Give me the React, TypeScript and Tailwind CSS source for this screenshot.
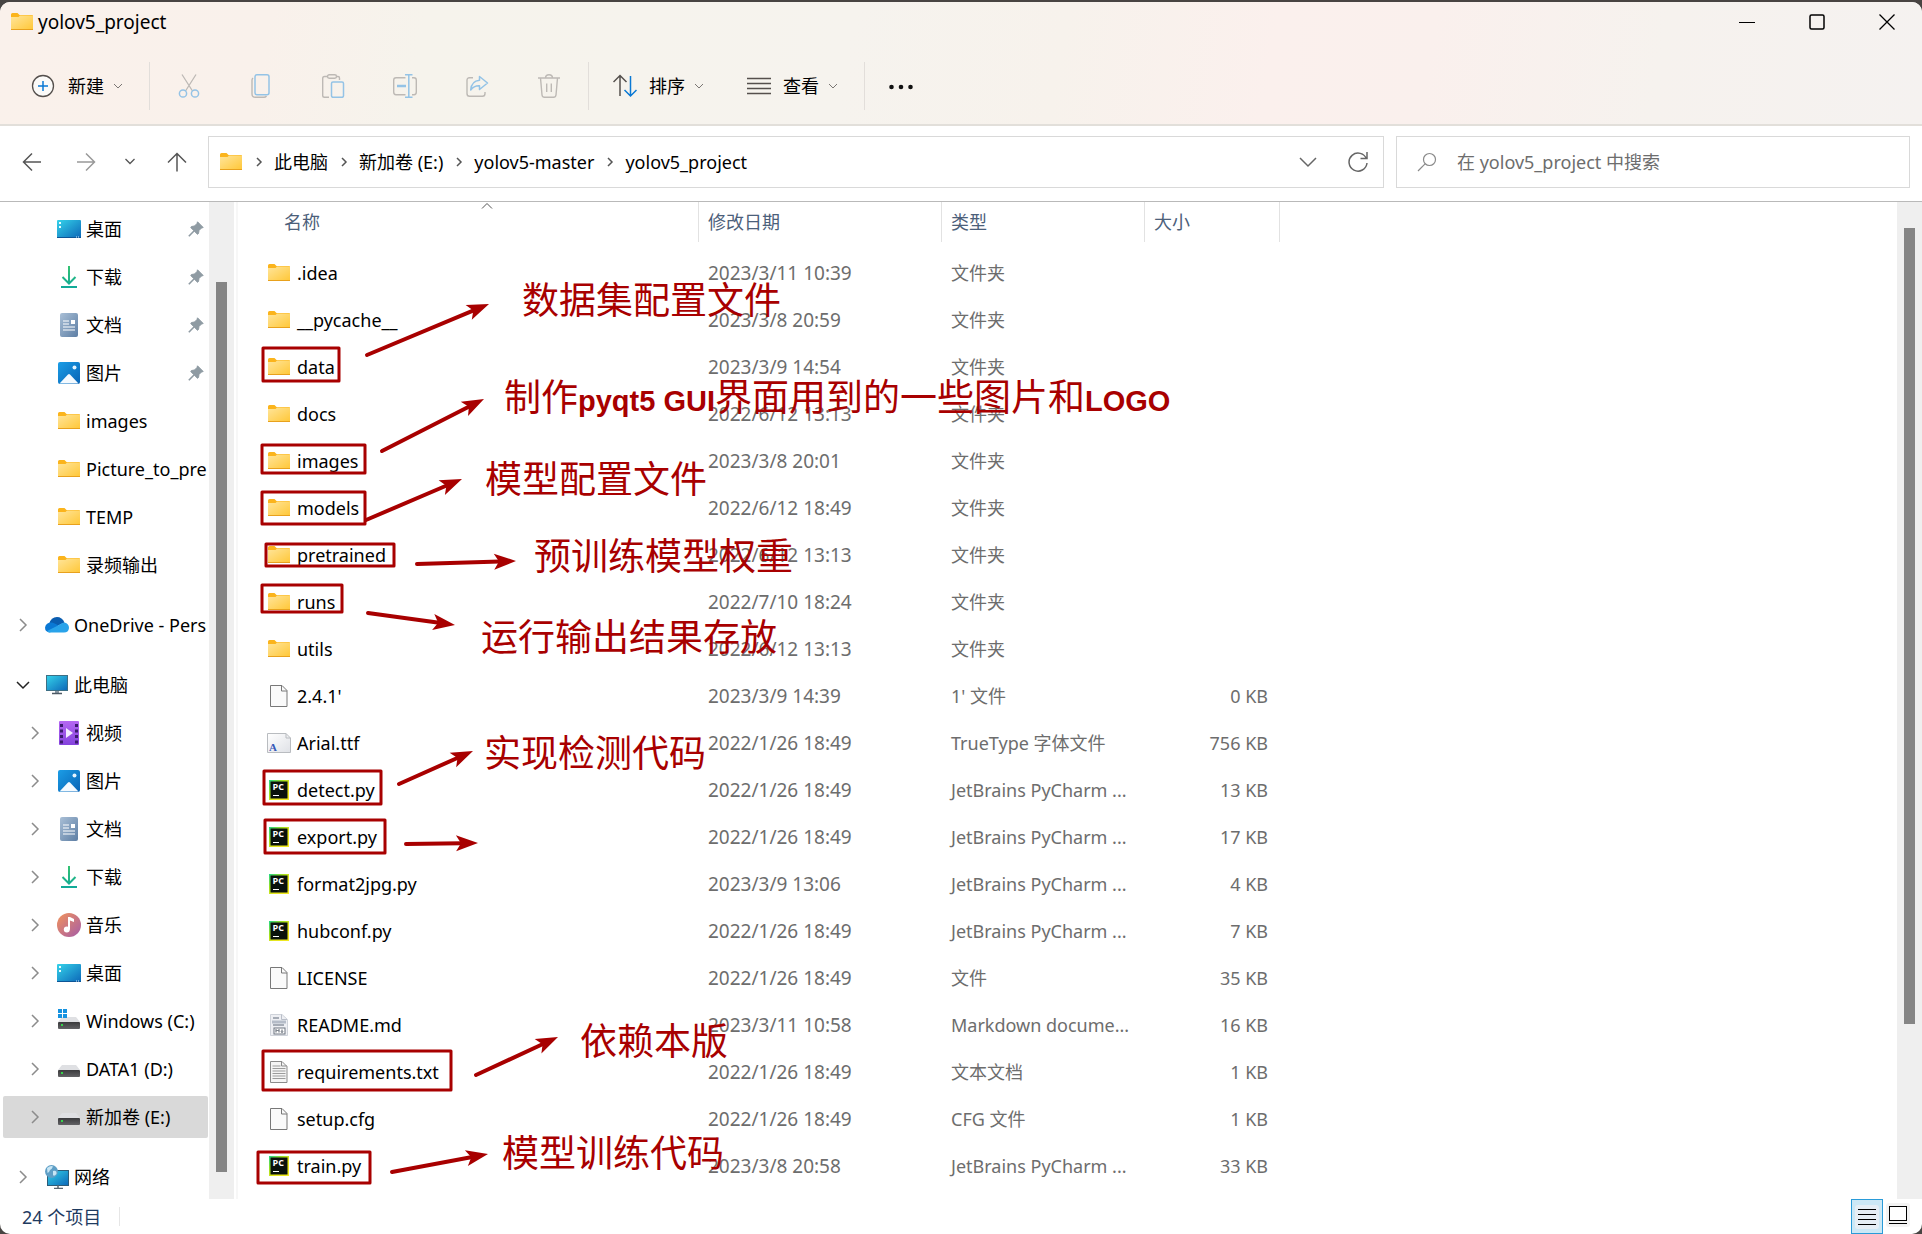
import { Fragment, useState } from 'react'
import type { ReactNode } from 'react'

type IconKind =
  | 'desktop'
  | 'download'
  | 'document'
  | 'picture'
  | 'folder'
  | 'onedrive'
  | 'pc'
  | 'video'
  | 'music'
  | 'system-drive'
  | 'drive'
  | 'network'
  | 'blank'
  | 'font'
  | 'pycharm'
  | 'markdown'
  | 'text'

type NavItem = {
  id: string
  label: string
  icon: IconKind
  root?: boolean
  expanded?: boolean
  collapsed?: boolean
  pinned?: boolean
}

type FileRow = {
  name: string
  date: string
  type: string
  size?: string
  icon: IconKind
}

const navGroups: NavItem[][] = [
  [
    { id: 'q-desktop', label: '桌面', icon: 'desktop', pinned: true },
    { id: 'q-download', label: '下载', icon: 'download', pinned: true },
    { id: 'q-document', label: '文档', icon: 'document', pinned: true },
    { id: 'q-picture', label: '图片', icon: 'picture', pinned: true },
    { id: 'q-images', label: 'images', icon: 'folder' },
    { id: 'q-pre', label: 'Picture_to_pre', icon: 'folder' },
    { id: 'q-temp', label: 'TEMP', icon: 'folder' },
    { id: 'q-record', label: '录频输出', icon: 'folder' },
  ],
  [{ id: 'onedrive', label: 'OneDrive - Pers', icon: 'onedrive', root: true, collapsed: true }],
  [
    { id: 'pc', label: '此电脑', icon: 'pc', root: true, expanded: true },
    { id: 'video', label: '视频', icon: 'video', collapsed: true },
    { id: 'picture', label: '图片', icon: 'picture', collapsed: true },
    { id: 'document', label: '文档', icon: 'document', collapsed: true },
    { id: 'download', label: '下载', icon: 'download', collapsed: true },
    { id: 'music', label: '音乐', icon: 'music', collapsed: true },
    { id: 'desktop', label: '桌面', icon: 'desktop', collapsed: true },
    { id: 'c', label: 'Windows (C:)', icon: 'system-drive', collapsed: true },
    { id: 'd', label: 'DATA1 (D:)', icon: 'drive', collapsed: true },
    { id: 'e', label: '新加卷 (E:)', icon: 'drive', collapsed: true },
  ],
  [{ id: 'network', label: '网络', icon: 'network', root: true, collapsed: true }],
]

const files: FileRow[] = [
  { name: '.idea', date: '2023/3/11 10:39', type: '文件夹', icon: 'folder' },
  { name: '__pycache__', date: '2023/3/8 20:59', type: '文件夹', icon: 'folder' },
  { name: 'data', date: '2023/3/9 14:54', type: '文件夹', icon: 'folder' },
  { name: 'docs', date: '2022/6/12 13:13', type: '文件夹', icon: 'folder' },
  { name: 'images', date: '2023/3/8 20:01', type: '文件夹', icon: 'folder' },
  { name: 'models', date: '2022/6/12 18:49', type: '文件夹', icon: 'folder' },
  { name: 'pretrained', date: '2022/6/12 13:13', type: '文件夹', icon: 'folder' },
  { name: 'runs', date: '2022/7/10 18:24', type: '文件夹', icon: 'folder' },
  { name: 'utils', date: '2022/6/12 13:13', type: '文件夹', icon: 'folder' },
  { name: "2.4.1'", date: '2023/3/9 14:39', type: "1' 文件", size: '0 KB', icon: 'blank' },
  { name: 'Arial.ttf', date: '2022/1/26 18:49', type: 'TrueType 字体文件', size: '756 KB', icon: 'font' },
  { name: 'detect.py', date: '2022/1/26 18:49', type: 'JetBrains PyCharm ...', size: '13 KB', icon: 'pycharm' },
  { name: 'export.py', date: '2022/1/26 18:49', type: 'JetBrains PyCharm ...', size: '17 KB', icon: 'pycharm' },
  { name: 'format2jpg.py', date: '2023/3/9 13:06', type: 'JetBrains PyCharm ...', size: '4 KB', icon: 'pycharm' },
  { name: 'hubconf.py', date: '2022/1/26 18:49', type: 'JetBrains PyCharm ...', size: '7 KB', icon: 'pycharm' },
  { name: 'LICENSE', date: '2022/1/26 18:49', type: '文件', size: '35 KB', icon: 'blank' },
  { name: 'README.md', date: '2023/3/11 10:58', type: 'Markdown docume...', size: '16 KB', icon: 'markdown' },
  { name: 'requirements.txt', date: '2022/1/26 18:49', type: '文本文档', size: '1 KB', icon: 'text' },
  { name: 'setup.cfg', date: '2022/1/26 18:49', type: 'CFG 文件', size: '1 KB', icon: 'blank' },
  { name: 'train.py', date: '2023/3/8 20:58', type: 'JetBrains PyCharm ...', size: '33 KB', icon: 'pycharm' },
]

// x, y, width, height
const markBoxes = [
  [25, 146, 76, 33],
  [24, 243, 103, 28],
  [24, 290, 103, 32],
  [28, 342, 128, 22],
  [24, 383, 80, 27],
  [26, 569, 117, 33],
  [27, 618, 120, 33],
  [25, 849, 188, 39],
  [20, 950, 112, 31],
]

// x1, y1, x2, y2
const markArrows = [
  [129, 153, 251, 102],
  [144, 249, 246, 197],
  [128, 318, 224, 277],
  [179, 362, 278, 359],
  [130, 411, 217, 423],
  [161, 582, 235, 549],
  [168, 642, 240, 641],
  [238, 873, 320, 835],
  [154, 970, 250, 952],
]

const markNotes = [
  { x: 284, y: 112, text: '数据集配置文件' },
  { x: 247, y: 291, text: '模型配置文件' },
  { x: 296, y: 368, text: '预训练模型权重' },
  { x: 243, y: 449, text: '运行输出结果存放' },
  { x: 246, y: 565, text: '实现检测代码' },
  { x: 342, y: 853, text: '依赖本版' },
  { x: 264, y: 965, text: '模型训练代码' },
]

const Svg = ({ size = 24, children }: { size?: number; children: ReactNode }) => (
  <svg width={size} height={size} viewBox="0 0 24 24" fill="none" className="shrink-0" aria-hidden="true">
    {children}
  </svg>
)

const ItemIcon = ({ kind }: { kind: IconKind }) => {
  switch (kind) {
    case 'folder':
      return (
        <Svg>
          <path d="M1 4.500Q1 3 2.500 3H7.500L9.500 5H22Q23 5 23 6V18H1Z" fill="#fbb41c" />
          <path d="M1 7H8.500L10 5.500H23V19H1Z" fill="url(#g-folder)" />
          <path d="M1 19.500H23" stroke="#e8a11d" />
        </Svg>
      )
    case 'desktop':
      return (
        <Svg>
          <rect x="0" y="3" width="24" height="18" rx="1" fill="url(#g-blue)" />
          <path d="M2 5h2v2H2zM2 9h2v2H2z" fill="#e8fbff" />
          <path d="M0 20.500H24" stroke="#0d5596" />
          <path d="M19 20h1M21 20h1" stroke="#d4ecff" />
        </Svg>
      )
    case 'download':
      return (
        <Svg>
          <path d="M12 1V18M5.500 12L12 18.500L18.500 12M4 22H20" stroke="url(#g-green)" strokeWidth="2" />
        </Svg>
      )
    case 'document':
      return (
        <Svg>
          <rect x="3" y="0" width="18" height="24" rx="2" fill="url(#g-doc)" />
          <path d="M6 8h6M6 11h6M6 14h12M6 17h12" stroke="#fff" strokeWidth="1.200" />
          <rect x="14" y="7" width="4" height="4" fill="#fff" />
        </Svg>
      )
    case 'picture':
      return (
        <Svg>
          <rect x="1" y="1" width="22" height="22" rx="2" fill="url(#g-pic)" />
          <path d="M2.500 22.500L11 13.500Q12 12.500 13 13.500L21.500 22.500Z" fill="#f4faff" />
          <circle cx="17.500" cy="6.500" r="2" fill="#e4f4ff" />
        </Svg>
      )
    case 'onedrive':
      return (
        <Svg>
          <path d="M4 11Q6 4 12 4Q17 4 19.500 9.500L10 14Z" fill="#0a5db0" />
          <path d="M5 19.500Q0 19 0 14.500Q1 9.500 6.500 9.500Q9 9.500 14 13Z" fill="#0a78d4" />
          <path d="M14 12Q17 9.500 19.500 9.500Q24 10.500 24 15Q23.500 19.500 19 19.500H5Q3 19.500 2 18Z" fill="#29a3ea" />
        </Svg>
      )
    case 'pc':
      return (
        <Svg>
          <rect x="1.500" y="2.500" width="21" height="15" fill="url(#g-blue)" stroke="#3d6f85" />
          <path d="M10 18h4v2h-4z" fill="#8b98a3" />
          <path d="M7 20.500h10" stroke="#4c5965" strokeWidth="1.500" />
        </Svg>
      )
    case 'video':
      return (
        <Svg>
          <rect x="2" y="0" width="20" height="24" rx="1" fill="url(#g-video)" />
          <path d="M4.500 3V23M19.500 3V23" stroke="#3c1a6e" strokeWidth="3" strokeDasharray="3 2.500" />
          <path d="M9 7L16 12L9 17Z" fill="#f4ecff" />
        </Svg>
      )
    case 'music':
      return (
        <Svg>
          <circle cx="12" cy="12" r="12" fill="url(#g-music)" />
          <circle cx="9.800" cy="16.500" r="3" fill="#fff" />
          <path d="M11 4H13L17 6V9L13 7.500V16.500H11Z" fill="#fff" />
        </Svg>
      )
    case 'system-drive':
    case 'drive':
      return (
        <Svg>
          <path d="M5 8H19L23 13H1Z" fill="#dfe0e3" />
          <rect x="1" y="13" width="22" height="7" rx="1" fill="url(#g-drive)" />
          <rect x="4" y="15" width="2" height="2" fill="#34d44a" />
          {kind === 'system-drive' && (
            <path d="M1 0h4v4H1zM6 0h4v4H6zM1 5h4v4H1zM6 5h4v4H6z" fill="#1592e0" />
          )}
        </Svg>
      )
    case 'network':
      return (
        <Svg>
          <rect x="2.500" y="5.500" width="21" height="15" fill="url(#g-blue)" stroke="#2d5c78" />
          <path d="M9 23.500h9M13 20v3" stroke="#59656f" strokeWidth="1.500" />
          <circle cx="6.500" cy="6.500" r="6.500" fill="#5f9fc6" />
          <path d="M2 3Q6 0 8 1.500Q7 4 5 5Q4 8 2.500 8ZM8 6Q12 5 11.500 9Q9 12 8 10Z" fill="#c8e6f5" />
        </Svg>
      )
    case 'blank':
      return (
        <Svg>
          <path d="M3.500 1.500H15L20 6.500V22.500H3.500Z" fill="#fafafa" stroke="#787878" />
          <path d="M14.500 1.500V7H20" stroke="#787878" />
        </Svg>
      )
    case 'text':
      return (
        <Svg>
          <path d="M3.500 1.500H15L20 6.500V22.500H3.500Z" fill="#f4f4f4" stroke="#8b8b8b" />
          <path d="M14.500 1.500V6H20" stroke="#8b8b8b" />
          <path d="M5.500 6h8M5.500 8.500h13M5.500 11h13M5.500 13.500h13M5.500 16h13M5.500 18.500h13" stroke="#9b9b9b" />
        </Svg>
      )
    case 'markdown':
      return (
        <Svg>
          <path d="M3.500 1.500H15L20.500 6.500V22.500H3.500Z" fill="#eeeff3" stroke="#cfd3da" />
          <path d="M14.500 1.500V6.500H20" stroke="#b9bec8" />
          <path d="M6 5h6M6 12h11" stroke="#8e96a3" strokeWidth="1.500" />
          <path d="M5 9h14" stroke="#b5bcc8" strokeWidth="3" />
          <rect x="7" y="15" width="11" height="6" fill="#fff" stroke="#6c7480" />
          <path d="M9 19.500V16.500L10.500 18L12 16.500V19.500M15 16.500V19.500M14 18.500L15 19.500L16 18.500" stroke="#555d69" />
        </Svg>
      )
    case 'font':
      return (
        <Svg>
          <path d="M0.500 2.500H19L23.500 7V21.500H0.500Z" fill="url(#g-paper)" stroke="#b9bcc0" />
          <path d="M19 2.500V7H23.500" stroke="#b9bcc0" />
          <text x="2" y="19.500" fontSize="11" fontWeight="700" fill="#3558b8" fontFamily="Liberation Serif, serif">A</text>
        </Svg>
      )
    case 'pycharm':
      return (
        <Svg>
          <rect x="2" y="2" width="20" height="20" fill="url(#g-pycharm)" />
          <rect x="3.500" y="3.500" width="17" height="17" fill="#0a120c" />
          <text x="5.500" y="12" fontSize="9" fontWeight="700" fill="#fff" fontFamily="Open Sans, sans-serif">PC</text>
          <path d="M6 17.500h6" stroke="#fff" />
        </Svg>
      )
  }
}

// Gradients shared by the item icons
const IconDefs = () => (
  <svg width="0" height="0" className="absolute" aria-hidden="true">
    <defs>
      <linearGradient id="g-folder" x1="0" y1="0" x2="1" y2="1">
        <stop offset="0" stopColor="#ffe59b" />
        <stop offset="1" stopColor="#ffc83a" />
      </linearGradient>
      <linearGradient id="g-blue" x1="0" y1="0" x2="1" y2="1">
        <stop offset="0" stopColor="#35d3ea" />
        <stop offset="1" stopColor="#0c67b8" />
      </linearGradient>
      <linearGradient id="g-green" gradientUnits="userSpaceOnUse" x1="0" y1="0" x2="0" y2="24">
        <stop offset="0" stopColor="#35c46f" />
        <stop offset="1" stopColor="#0fa89c" />
      </linearGradient>
      <linearGradient id="g-doc" x1="0" y1="0" x2="1" y2="1">
        <stop offset="0" stopColor="#a9bfd6" />
        <stop offset="1" stopColor="#5d7ea4" />
      </linearGradient>
      <linearGradient id="g-pic" x1="0" y1="0" x2="1" y2="1">
        <stop offset="0" stopColor="#1b9de6" />
        <stop offset="1" stopColor="#0863b5" />
      </linearGradient>
      <linearGradient id="g-video" x1="0" y1="0" x2="0" y2="1">
        <stop offset="0" stopColor="#b568f2" />
        <stop offset="1" stopColor="#8442dd" />
      </linearGradient>
      <linearGradient id="g-music" x1="0" y1="0" x2="1" y2="1">
        <stop offset="0" stopColor="#f2935a" />
        <stop offset="1" stopColor="#a55ca8" />
      </linearGradient>
      <linearGradient id="g-drive" x1="0" y1="0" x2="0" y2="1">
        <stop offset="0" stopColor="#3a3a3c" />
        <stop offset="1" stopColor="#626265" />
      </linearGradient>
      <linearGradient id="g-paper" x1="0" y1="0" x2="1" y2="1">
        <stop offset="0" stopColor="#ffffff" />
        <stop offset="1" stopColor="#dfe1e6" />
      </linearGradient>
      <linearGradient id="g-pycharm" x1="0" y1="0" x2="1" y2="1">
        <stop offset="0" stopColor="#1fd789" />
        <stop offset="0.350" stopColor="#9fe01f" />
        <stop offset="0.600" stopColor="#e6e61f" />
        <stop offset="1" stopColor="#f3ea22" />
      </linearGradient>
    </defs>
  </svg>
)

const IconCaret = () => (
  <svg width="10" height="10" viewBox="0 0 10 10" fill="none" stroke="#7a7673" aria-hidden="true">
    <path d="M1 3L5 7L9 3" />
  </svg>
)

const IconCrumb = () => (
  <svg width="8" height="10" viewBox="0 0 8 10" fill="none" stroke="#555" strokeWidth="1.500" aria-hidden="true">
    <path d="M2 1L6 5L2 9" />
  </svg>
)

const IconPin = () => (
  <svg width="16" height="16" viewBox="0 0 16 16" fill="#8f9ba3" stroke="#8f9ba3" aria-hidden="true">
    <path d="M9.500 0.800L15.200 6.500L13.500 7L11 9.500L10.500 12.500L9.500 13.300L2.700 6.500L3.500 5.500L6.500 5L9 2.500Z" />
    <path d="M6 10L0.800 15.200" strokeWidth="1.600" />
  </svg>
)

const toolIcons = [
  {
    label: '剪切',
    icon: (
      <Svg>
        <path d="M5 0.500L15.500 17M19 0.500L8.500 17" stroke="#bdb9b5" strokeWidth="1.300" />
        <circle cx="6" cy="19.500" r="3.600" stroke="#94c3e6" strokeWidth="1.500" />
        <circle cx="18" cy="19.500" r="3.600" stroke="#94c3e6" strokeWidth="1.500" />
      </Svg>
    ),
  },
  {
    label: '复制',
    icon: (
      <Svg>
        <path d="M4 4Q3 5 3 6V20Q3 23.300 6.500 23.300H15Q16.500 23.300 17.500 22" stroke="#bdb9b5" strokeWidth="1.400" />
        <rect x="6" y="0.800" width="14" height="20" rx="2" stroke="#94c3e6" strokeWidth="1.500" />
      </Svg>
    ),
  },
  {
    label: '粘贴',
    icon: (
      <Svg>
        <path d="M7 2.500H3.500Q1.700 2.500 1.700 4.500V21.500Q1.700 23.300 3.500 23.300H8M15 2.500H17Q18.500 2.500 18.500 4V6" stroke="#bdb9b5" strokeWidth="1.400" />
        <rect x="6.500" y="0.800" width="9" height="3.500" rx="1.700" stroke="#bdb9b5" strokeWidth="1.400" />
        <rect x="10.500" y="8" width="12" height="15.300" rx="1.500" stroke="#94c3e6" strokeWidth="1.500" />
      </Svg>
    ),
  },
  {
    label: '重命名',
    icon: (
      <Svg>
        <path d="M12.500 3.700H3Q0.700 3.700 0.700 6V18Q0.700 20.700 3 20.700H12.500M19 3.700H21Q23.300 3.700 23.300 6V18Q23.300 20.700 21 20.700H19" stroke="#bdb9b5" strokeWidth="1.400" />
        <path d="M4 12H13" stroke="#94c3e6" strokeWidth="2.500" />
        <path d="M15.800 1V23M12 0.800H19.500M12 23.200H19.500" stroke="#94c3e6" strokeWidth="1.500" />
      </Svg>
    ),
  },
  {
    label: '共享',
    icon: (
      <Svg>
        <path d="M8 3.700H4.500Q2 3.700 2 6.500V19.500Q2 22.300 4.500 22.300H17.500Q20 22.300 20 19.500V18" stroke="#bdb9b5" strokeWidth="1.400" />
        <path d="M14.500 2.500L22.500 9L14.500 15.500V11.800Q9 11.500 5.700 16Q6.500 7 14.500 6.300Z" stroke="#94c3e6" strokeWidth="1.500" strokeLinejoin="round" />
      </Svg>
    ),
  },
  {
    label: '删除',
    icon: (
      <Svg>
        <path d="M1 4H23M8.500 4Q8.500 0.800 12 0.800Q15.500 0.800 15.500 4M3.500 4L5 21Q5.300 23.300 7.500 23.300H16.500Q18.700 23.300 19 21L20.500 4M9.700 9.500V18M14.300 9.500V18" stroke="#bdb9b5" strokeWidth="1.400" />
      </Svg>
    ),
  },
]

function Arrow({ x1, y1, x2, y2 }: { x1: number; y1: number; x2: number; y2: number }) {
  const length = Math.hypot(x2 - x1, y2 - y1)
  const angle = (Math.atan2(y2 - y1, x2 - x1) * 180) / Math.PI
  return (
    <g transform={`translate(${x1} ${y1}) rotate(${angle})`}>
      <line x1="0" y1="0" x2={length - 16} y2="0" strokeWidth="4" strokeLinecap="round" />
      <path d={`M${length} 0L${length - 22} -8L${length - 17} 0L${length - 22} 8Z`} stroke="none" fill="#a80000" />
    </g>
  )
}

const Annotations = () => (
  <svg width="1042" height="990" className="pointer-events-none absolute top-0 left-0" fill="none" stroke="#a80000">
    {markBoxes.map(([x, y, w, h]) => (
      <rect key={y} x={x} y={y} width={w} height={h} strokeWidth="3" strokeLinejoin="round" />
    ))}
    {markArrows.map(([x1, y1, x2, y2]) => (
      <Arrow key={y1} x1={x1} y1={y1} x2={x2} y2={y2} />
    ))}
    <g stroke="none" fill="#a80000" fontSize="37" fontFamily="Noto Sans CJK SC, sans-serif">
      {markNotes.map(note => (
        <text key={note.text} x={note.x} y={note.y}>{note.text}</text>
      ))}
      <text x="266" y="209">
        制作
        <tspan fontFamily="Liberation Sans, sans-serif" fontSize="29" fontWeight="700">pyqt5 GUI</tspan>
        界面用到的一些图片和
        <tspan fontFamily="Liberation Sans, sans-serif" fontSize="29" fontWeight="700">LOGO</tspan>
      </text>
    </g>
  </svg>
)

function Sidebar() {
  const [selected, setSelected] = useState('e')

  return (
    <nav className="flex w-[209px] shrink-0 flex-col gap-3 overflow-hidden pt-[3px]">
      {navGroups.map((group, g) => (
        <ul key={g}>
          {group.map(item => (
            <li key={item.id} className="h-12 py-[3px] pr-px pl-[3px]">
              <button
                onClick={() => setSelected(item.id)}
                className={`flex h-full w-full items-center overflow-hidden rounded-xs text-left whitespace-nowrap ${
                  item.root ? 'pl-[14px]' : 'pl-[26px]'
                } ${item.id === selected ? 'bg-[#d9d9d9]' : ''}`}
              >
                <span className="flex w-3 shrink-0 justify-center">
                  {item.collapsed && (
                    <svg width="12" height="14" viewBox="0 0 12 14" fill="none" stroke="#8c8c8c" strokeWidth="1.500" aria-hidden="true">
                      <path d="M3 1L9 7L3 13" />
                    </svg>
                  )}
                  {item.expanded && (
                    <svg width="14" height="12" viewBox="0 0 14 12" fill="none" stroke="#222" strokeWidth="1.500" className="shrink-0" aria-hidden="true">
                      <path d="M1 3L7 9L13 3" />
                    </svg>
                  )}
                </span>
                <span className="ml-4 shrink-0">
                  <ItemIcon kind={item.icon} />
                </span>
                <span className="ml-[5px]">{item.label}</span>
                {item.pinned && (
                  <span className="mr-1 ml-auto">
                    <IconPin />
                  </span>
                )}
              </button>
            </li>
          ))}
        </ul>
      ))}
    </nav>
  )
}

function FileTable() {
  return (
    <table className="w-[1042px] table-fixed border-collapse text-left">
      <colgroup>
        <col className="w-[461px]" />
        <col className="w-[243px]" />
        <col className="w-[203px]" />
        <col />
      </colgroup>
      <thead className="text-[#4c607a]">
        <tr className="h-[47px]">
          <th className="relative p-0 align-top font-normal">
            <svg width="12" height="8" viewBox="0 0 12 8" fill="none" stroke="#555" className="absolute top-0 left-[243px]" aria-hidden="true">
              <path d="M1 6.500L6 1.500L11 6.500" />
            </svg>
            <div className="flex h-10 items-center border-r border-[#e2e2e2] pl-[46px]">名称</div>
          </th>
          <th className="p-0 align-top font-normal">
            <div className="flex h-10 items-center border-r border-[#e2e2e2] pl-[9px]">修改日期</div>
          </th>
          <th className="p-0 align-top font-normal">
            <div className="flex h-10 items-center border-r border-[#e2e2e2] pl-[9px]">类型</div>
          </th>
          <th className="p-0 align-top font-normal">
            <div className="flex h-10 items-center border-r border-[#e2e2e2] pl-[9px]">大小</div>
          </th>
        </tr>
      </thead>
      <tbody className="whitespace-nowrap text-[#6d6d6d]">
        {files.map(file => (
          <tr key={file.name} className="h-[47px]">
            <td className="p-0 text-black">
              <div className="flex items-center gap-[6px] pl-[29px]">
                <ItemIcon kind={file.icon} />
                <span>{file.name}</span>
              </div>
            </td>
            <td className="py-0 pr-0 pl-[9px] text-[19px]">{file.date}</td>
            <td className="py-0 pr-0 pl-[9px]">{file.type}</td>
            <td className="py-0 pr-3 pl-0 text-right">{file.size}</td>
          </tr>
        ))}
      </tbody>
    </table>
  )
}

export default function App() {
  const [query, setQuery] = useState('')
  const [view, setView] = useState<'details' | 'large'>('details')

  return (
    <div className="h-screen bg-[#484442] pt-[2px] font-['Noto_Sans','Noto_Sans_CJK_SC',sans-serif] text-lg leading-6 text-black">
      <IconDefs />
      <div className="flex h-full flex-col overflow-hidden rounded-[10px] bg-white">

        {/* Title bar and command bar */}
        <header className="border-b-2 border-[#e2dfda] bg-[linear-gradient(100deg,#faf1eb_0%,#f9f1eb_14%,#f6f3ec_22%,#f6f3ee_44%,#f7f2ec_55%,#fbf0ed_66%,#faf0ed_74%,#f6f2ee_86%,#f5f2f0_100%)]">
          <div className="flex h-10 items-center">
            <div className="flex items-center gap-1 pl-[10px]">
              <ItemIcon kind="folder" />
              <h1 className="text-[19px]">yolov5_project</h1>
            </div>
            <div className="ml-auto flex h-full">
              <button aria-label="最小化" className="flex w-[70px] items-center justify-center">
                <svg width="16" height="16" viewBox="0 0 16 16" stroke="#000"><path d="M0 8.500H16" /></svg>
              </button>
              <button aria-label="最大化" className="flex w-[70px] items-center justify-center">
                <svg width="16" height="16" viewBox="0 0 16 16" fill="none" stroke="#000" strokeWidth="1.500"><rect x="1" y="1" width="14" height="14" rx="1.500" /></svg>
              </button>
              <button aria-label="关闭" className="flex w-[70px] items-center justify-center">
                <svg width="16" height="16" viewBox="0 0 16 16" stroke="#000" strokeWidth="1.300"><path d="M0.500 0.500L15.500 15.500M15.500 0.500L0.500 15.500" /></svg>
              </button>
            </div>
          </div>

          <div className="flex h-[82px] items-center pt-[6px]">
            <button className="ml-[31px] flex items-center">
              <Svg>
                <circle cx="12" cy="12" r="10.500" stroke="#55504d" strokeWidth="1.300" fill="#fbfaf8" />
                <path d="M12 7V17M7 12H17" stroke="#0a78d4" strokeWidth="1.500" />
              </Svg>
              <span className="mr-[9px] ml-[13px]">新建</span>
              <IconCaret />
            </button>
            <div className="mr-[3px] ml-[26px] h-12 w-px bg-[#e2deda]" />
            {toolIcons.map(tool => (
              <button key={tool.label} aria-label={tool.label} disabled className="flex h-12 w-[72px] items-center justify-center">
                {tool.icon}
              </button>
            ))}
            <div className="mr-6 ml-[3px] h-12 w-px bg-[#e2deda]" />
            <button className="flex items-center">
              <Svg>
                <path d="M7 22V1.500M0.500 8L7 1.500L13.500 8" stroke="#55504d" strokeWidth="1.500" />
                <path d="M17.500 2V22M11.500 16L17.500 22L23.500 16" stroke="#0a78d4" strokeWidth="1.500" />
              </Svg>
              <span className="mr-[9px] ml-3">排序</span>
              <IconCaret />
            </button>
            <button className="ml-[43px] flex items-center">
              <Svg>
                <path d="M0 4.500H24M0 9.500H24M0 14.500H24M0 19.500H24" stroke="#55504d" strokeWidth="1.300" />
              </Svg>
              <span className="mr-[9px] ml-3">查看</span>
              <IconCaret />
            </button>
            <div className="mr-6 ml-[26px] h-12 w-px bg-[#e2deda]" />
            <button aria-label="更多">
              <Svg>
                <circle cx="2.500" cy="13" r="2.300" fill="#111" />
                <circle cx="12" cy="13" r="2.300" fill="#111" />
                <circle cx="21.500" cy="13" r="2.300" fill="#111" />
              </Svg>
            </button>
          </div>
        </header>

        {/* Navigation and address bar */}
        <div className="flex border-b border-[#b9b9b9] pt-[10px] pr-3 pb-[13px]">
          <div className="flex gap-[14px] pr-2 pl-3">
            <button aria-label="后退" className="flex w-10 items-center justify-center">
              <svg width="20" height="20" viewBox="0 0 20 20" fill="none" stroke="#555" strokeWidth="1.500"><path d="M19 10H1.500M10 1.500L1.500 10L10 18.500" /></svg>
            </button>
            <button aria-label="前进" className="flex w-10 items-center justify-center">
              <svg width="20" height="20" viewBox="0 0 20 20" fill="none" stroke="#999" strokeWidth="1.500"><path d="M1 10H18.500M10 1.500L18.500 10L10 18.500" /></svg>
            </button>
            <button aria-label="最近的位置" className="flex w-5 items-center justify-center">
              <svg width="12" height="12" viewBox="0 0 12 12" fill="none" stroke="#555" strokeWidth="1.300"><path d="M1.500 3L6 7.500L10.500 3" /></svg>
            </button>
            <button aria-label="上移" className="flex w-[46px] items-center justify-center">
              <svg width="20" height="20" viewBox="0 0 20 20" fill="none" stroke="#555" strokeWidth="1.500"><path d="M10 19.500V1.500M1 10.500L10 1.500L19 10.500" /></svg>
            </button>
          </div>

          <div className="flex h-[52px] flex-1 items-center border border-[#d9d9d9] pl-[10px] whitespace-nowrap">
            <ItemIcon kind="folder" />
            {['此电脑', '新加卷 (E:)', 'yolov5-master', 'yolov5_project'].map(crumb => (
              <Fragment key={crumb}>
                <span className="flex w-[31px] justify-center"><IconCrumb /></span>
                <a href="#">{crumb}</a>
              </Fragment>
            ))}
            <button aria-label="历史记录" className="ml-auto flex w-[50px] justify-center">
              <svg width="18" height="18" viewBox="0 0 18 18" fill="none" stroke="#666" strokeWidth="1.500"><path d="M1 5L9 13L17 5" /></svg>
            </button>
            <button aria-label="刷新" className="flex w-[50px] justify-center">
              <svg width="22" height="22" viewBox="0 0 22 22" fill="none" stroke="#666" strokeWidth="1.500">
                <path d="M19.500 8A9 9 0 1 0 20 12M20 1V7.500H13.500" />
              </svg>
            </button>
          </div>

          <label className="ml-3 flex h-[52px] w-[514px] items-center gap-5 border border-[#d9d9d9] pl-5">
            <svg width="20" height="20" viewBox="0 0 20 20" fill="none" stroke="#8a8a8a" strokeWidth="1.200" aria-hidden="true">
              <circle cx="12.500" cy="7.500" r="6" />
              <path d="M8.300 11.700L1 19" />
            </svg>
            <input
              value={query}
              onChange={e => setQuery(e.target.value)}
              aria-label="搜索"
              placeholder="在 yolov5_project 中搜索"
              className="min-w-0 flex-1 outline-none placeholder:text-[#6d6d6d]"
            />
          </label>
        </div>

        {/* Folder tree and file list */}
        <div className="flex min-h-0 flex-1">
          <Sidebar />
          <div className="w-[25px] shrink-0 bg-[#efefef] pt-20 pr-[7px] pb-[27px] pl-[7px]">
            <div className="h-full bg-[#858585]" />
          </div>
          <div className="ml-[2px] w-[2px] shrink-0 bg-[#f7f7f7]" />
          <main className="relative min-w-0 flex-1 overflow-hidden">
            <FileTable />
            <Annotations />
          </main>
          <div className="w-[25px] shrink-0 bg-[#efefef] pt-[26px] pr-[7px] pl-[7px]">
            <div className="h-[82%] bg-[#858585]" />
          </div>
        </div>

        {/* Status bar */}
        <footer className="flex h-[35px] shrink-0 items-stretch">
          <p className="flex items-center pl-[22px] text-[#1e3a5f]">24 个项目</p>
          <div className="my-2 ml-[18px] w-px bg-[#e6e6e6]" />
          <div className="mr-3 ml-auto flex gap-[3px]">
            <button
              aria-label="详细信息"
              onClick={() => setView('details')}
              className={`flex w-8 items-center justify-center ${view === 'details' ? 'border border-[#2a9bd8] bg-[#cce8f6]' : ''}`}
            >
              <svg width="24" height="24" viewBox="0 0 24 24" className="shrink-0" stroke="#000">
                <rect width="24" height="24" rx="3" fill="#e6eef5" stroke="none" />
                <path d="M3 4.500H21M3 9.500H21M3 14.500H21M3 19.500H21" />
              </svg>
            </button>
            <button
              aria-label="大图标"
              onClick={() => setView('large')}
              className={`flex w-6 justify-center pt-1 ${view === 'large' ? 'bg-[#cce8f6]' : ''}`}
            >
              <svg width="24" height="24" viewBox="0 0 24 24" className="shrink-0" fill="none" stroke="#000">
                <rect width="24" height="24" rx="3" fill="#f3f3f3" stroke="none" />
                <rect x="3.500" y="3.500" width="17" height="14" fill="#fff" />
                <path d="M3 20.500H21" />
              </svg>
            </button>
          </div>
        </footer>
      </div>
    </div>
  )
}
